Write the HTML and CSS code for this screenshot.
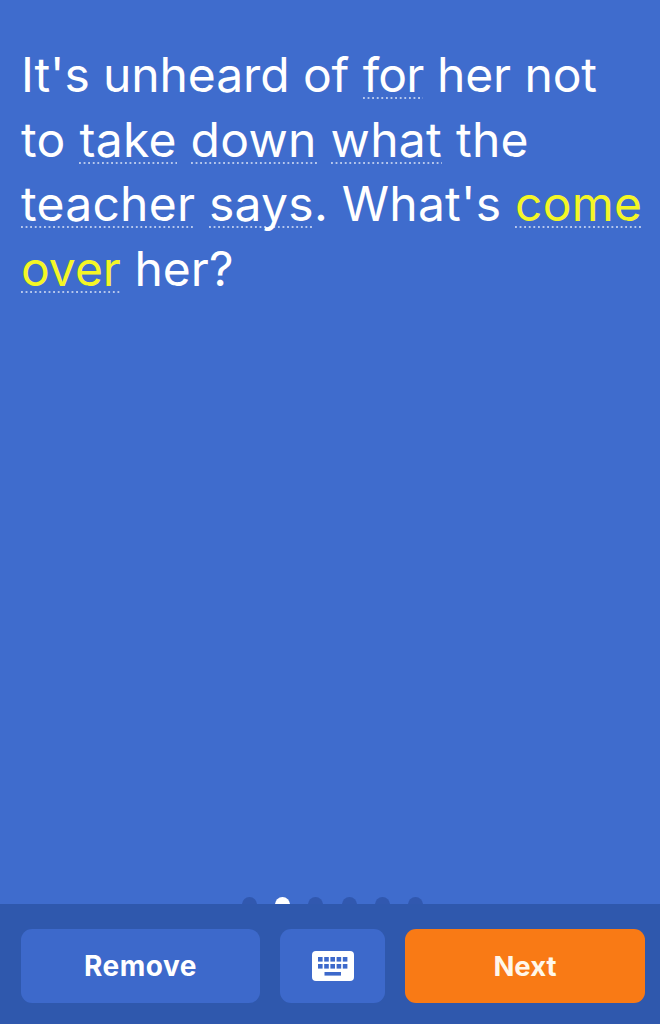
FILE: index.html
```html
<!DOCTYPE html>
<html lang="en">
<head>
<meta charset="utf-8">
<title>Flashcard</title>
<link rel="stylesheet" href="styles.css">
</head>
<body>
<div class="screen">
  <main class="card">
    <p class="sentence">
      <span class="line line-1">It's unheard of <span class="word word-for">for</span> her not</span>
      <span class="line line-2">to <span class="word">take</span> <span class="word">down</span> <span class="word">what</span> the</span>
      <span class="line line-3"><span class="word">teacher</span> <span class="word">says</span>. What's <span class="word idiom">come</span></span>
      <span class="line"><span class="word idiom">over</span> her?</span>
    </p>
  </main>
  <div class="dots">
    <span class="dot"></span>
    <span class="dot active"></span>
    <span class="dot"></span>
    <span class="dot"></span>
    <span class="dot"></span>
    <span class="dot"></span>
  </div>
  <footer class="toolbar">
    <button class="btn btn-remove">Remove</button>
    <button class="btn btn-icon" aria-label="Keyboard">
      <svg class="kbd" width="42" height="30" viewBox="0 0 42 30">
        <rect width="42" height="30" rx="4" fill="#fff"/>
        <g fill="#3d69cb">
          <rect x="6" y="6" width="4.6" height="4.6"/><rect x="12.2" y="6" width="4.6" height="4.6"/><rect x="18.4" y="6" width="4.6" height="4.6"/><rect x="24.6" y="6" width="4.6" height="4.6"/><rect x="30.8" y="6" width="4.6" height="4.6"/>
          <rect x="6" y="13" width="4.6" height="4.6"/><rect x="12.2" y="13" width="4.6" height="4.6"/><rect x="18.4" y="13" width="4.6" height="4.6"/><rect x="24.6" y="13" width="4.6" height="4.6"/><rect x="30.8" y="13" width="4.6" height="4.6"/>
          <rect x="12.5" y="21" width="16.5" height="3.6"/>
        </g>
      </svg>
    </button>
    <button class="btn btn-next">Next</button>
  </footer>
</div>
</body>
</html>
```
FILE: styles.css
```css
* { box-sizing: border-box; }
html, body { margin: 0; padding: 0; }
body { background: #3f6ccd; font-family: Inter, "Liberation Sans", sans-serif; }

.screen {
  width: 660px;
  height: 1024px;
  display: flex;
  flex-direction: column;
  overflow: hidden;
}

.card {
  flex: 1;
  padding: 43px 10px 0 21px;
}

.sentence {
  margin: 0;
  font-size: 48px;
  line-height: 64.5px;
  font-weight: 400;
  color: #fff;
}

.line { display: block; white-space: nowrap; }
.line-1 { letter-spacing: -0.1px; }
.line-2 { letter-spacing: 0.3px; }
.line-3 { letter-spacing: 0.25px; }
.word-for { letter-spacing: -0.8px; }

.word {
  background-image: linear-gradient(to right, rgba(255,255,255,.62) 2px, transparent 2px);
  background-size: 4.6px 2px;
  background-repeat: repeat-x;
  background-position: 0 52px;
}

.idiom { color: #f4f626; }

.dots {
  height: 7px;
  display: flex;
  justify-content: center;
  gap: 18.2px;
  overflow: hidden;
  padding-left: 5px;
}

.dot {
  flex: none;
  width: 15px;
  height: 15px;
  border-radius: 50%;
  background: #3158af;
}

.dot.active { background: #fff; }

.toolbar {
  height: 120px;
  background: #2f58ad;
  display: flex;
  gap: 20px;
  padding: 25px 15px 21px 21px;
}

.btn {
  border: 0;
  margin: 0;
  padding: 0;
  height: 74px;
  border-radius: 11px;
  background: #3d69cb;
  color: #fff;
  font-family: inherit;
  font-size: 28px;
  font-weight: 700;
  display: flex;
  align-items: center;
  justify-content: center;
}

.btn-remove { width: 239px; letter-spacing: 0.5px; }
.btn-icon { width: 105px; }
.btn-next { width: 240px; background: #f97a15; color: #fff7ea; font-size: 27.5px; }
.kbd { display: block; }
```
